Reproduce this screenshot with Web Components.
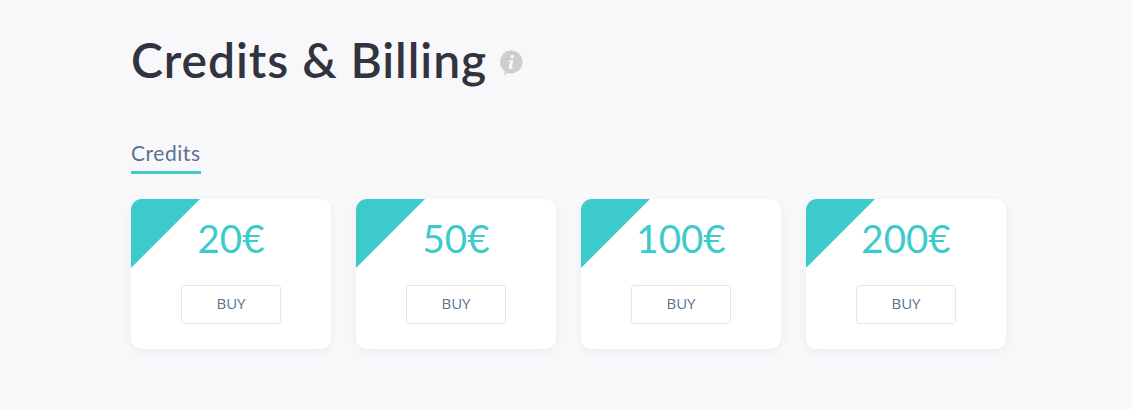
<!DOCTYPE html>
<html lang="en"><head><meta charset="utf-8"><title>Credits & Billing</title>
<style>html,body{margin:0;background:#f8f8fb;height:100%}body{font-family:"Lato","Liberation Sans",sans-serif}</style>
</head><body>
<billing-page>
  <page-title>Credits &amp; Billing</page-title>
  <section-tab>Credits</section-tab>
  <credit-grid>
    <credit-card>20€</credit-card>
    <credit-card>50€</credit-card>
    <credit-card>100€</credit-card>
    <credit-card>200€</credit-card>
  </credit-grid>
</billing-page>
<script>
function def(name, html){
  customElements.define(name, class extends HTMLElement{
    constructor(){super();this.attachShadow({mode:'open'}).innerHTML=html;}
  });
}
def('billing-page',`<style>:host{display:flex;flex-direction:column;align-items:flex-start;padding:30px 0 0 131px}</style><slot></slot>`);
def('page-title',`<style>
:host{display:flex;align-items:center;gap:12px;height:60px;color:#31343e;font:600 48px/60px Lato,"Liberation Sans",sans-serif;letter-spacing:.95px;margin-bottom:51px}
svg{display:block;margin-top:6px}
</style><slot></slot><svg width="24" height="26" viewBox="0 0 24 26" aria-hidden="true"><path fill="#cecece" d="M12 .5a11.500 11.500 0 1 1-3.600 22.400L5.500 25.500l.2-4.400A11.500 11.500 0 0 1 12 .5z"/><circle cx="13.400" cy="6.600" r="1.900" fill="#f8f8fb"/><path fill="#f8f8fb" d="M9.600 10.200h4.900l-1.700 6.600c-.1.5.3.6 1.500.1l-.3 1.300c-2.300 1.100-4.600.9-4.100-1.300l1.100-4.600c.1-.6-.3-.8-1.500-.8z"/></svg>`);
def('section-tab',`<style>
:host{display:block;color:#5b7195;font:400 21px/24px Lato,"Liberation Sans",sans-serif;letter-spacing:.55px;padding-bottom:6px;border-bottom:3px solid #3ccacb;margin-bottom:25px}
</style><slot></slot>`);
def('credit-grid',`<style>:host{display:flex;gap:25px}</style><slot></slot>`);
def('credit-card',`<style>
:host{display:flex;flex-direction:column;align-items:center;box-sizing:border-box;width:200px;height:150px;background:#fff;border-radius:11px;overflow:hidden;position:relative;box-shadow:0 3px 10px rgba(40,50,90,.06);padding-top:15px}
.corner{position:absolute;left:0;top:0;width:69px;height:69px;background:#3ccacb;clip-path:polygon(0 0,100% 0,0 100%)}
.price{color:#3ccacb;font:400 38.5px/48px Lato,"Liberation Sans",sans-serif;position:relative}
button{all:unset;box-sizing:border-box;width:100px;height:39px;margin-top:23px;padding-bottom:3px;border:1px solid #e6e7ec;border-radius:3px;display:flex;align-items:center;justify-content:center;color:#5b7195;font:400 15px "Open Sans","Liberation Sans",sans-serif}
</style><div class="corner"></div><div class="price"><slot></slot></div><button>BUY</button>`);
</script>
</body></html>
